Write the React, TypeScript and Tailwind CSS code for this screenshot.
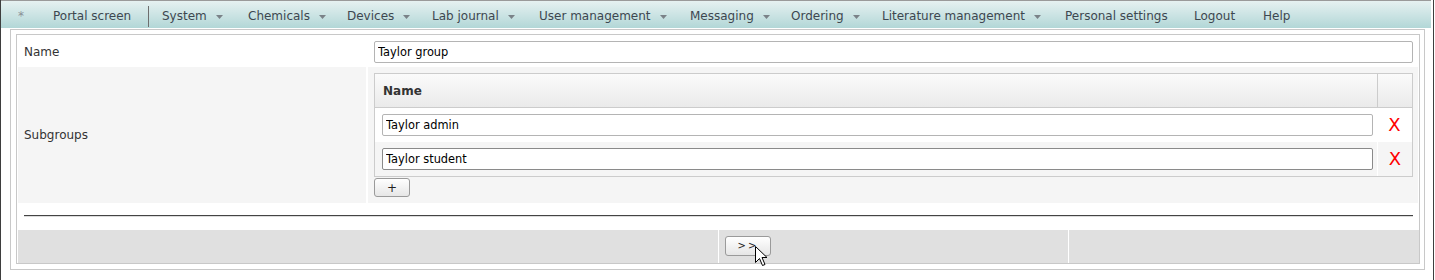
import React from 'react';

const menuItems: { label: string; width: number; arrow?: boolean }[] = [
  { label: 'Chemicals', width: 99, arrow: true },
  { label: 'Devices', width: 85, arrow: true },
  { label: 'Lab journal', width: 107, arrow: true },
  { label: 'User management', width: 151, arrow: true },
  { label: 'Messaging', width: 101, arrow: true },
  { label: 'Ordering', width: 91, arrow: true },
  { label: 'Literature management', width: 183, arrow: true },
  { label: 'Personal settings', width: 129 },
  { label: 'Logout', width: 69 },
  { label: 'Help', width: 60 },
];

const Caret = () => (
  <svg width="7" height="4" viewBox="0 0 7 4" className="ml-[9px] mt-[2px] shrink-0">
    <polygon points="0,0 7,0 3.5,4" fill="#7a8288" />
  </svg>
);

const MenuItem = ({ label, width, arrow }: { label: string; width: number; arrow?: boolean }) => (
  <div className="flex items-center shrink-0 whitespace-nowrap" style={{ width }}>
    <span>{label}</span>
    {arrow && <Caret />}
  </div>
);

const TextBox = ({ value, dark }: { value: string; dark?: boolean }) => (
  <input
    readOnly
    value={value}
    className={`block w-full h-[22px] bg-white rounded-[2px] border pl-[3px] text-[11.4px] text-black outline-none ${
      dark ? 'border-[#8a8a8a]' : 'border-[#b4b4b4]'
    }`}
  />
);

const RemoveMark = () => (
  <span className="text-[18px] leading-none text-[#ff0000]">X</span>
);

export default function App() {
  return (
    <div className="relative w-[1434px] h-[280px] bg-white border-l border-r border-[#3e3e3e] font-['DejaVu_Sans',sans-serif] text-[12px] text-[#333]">
      {/* top menu */}
      <div className="mr-[2px] h-[28px] border-t border-[#9a9a9a] bg-gradient-to-b from-[#e6f1f1] to-[#b2d7d7] flex items-center pl-[17px] pt-[3px] text-[#3d4750]">
        <div className="w-[35px] text-[#8a9096] shrink-0">*</div>
        <div className="w-[95px] shrink-0 whitespace-nowrap">Portal screen</div>
        <div className="w-px h-[21px] bg-[#6e6e6e] shrink-0" />
        <div className="pl-[13px] w-[99px] flex items-center shrink-0 whitespace-nowrap">
          <span>System</span>
          <Caret />
        </div>
        {menuItems.map((m) => (
          <MenuItem key={m.label} {...m} />
        ))}
      </div>

      {/* outer frame */}
      <div className="ml-[9px] mt-[1px] w-[1415px] h-[241px] border border-[#c8c8c8]">
        <div className="ml-[5px] mt-[4px] w-[1404px] h-[230px] border border-[#c8c8c8]">
          {/* form rows */}
          <div className="grid grid-cols-[348px_1fr] gap-x-[2px] gap-y-px pl-px pr-px pt-px">
            <div className="h-[30px] flex items-center pl-[6px] pt-px bg-white">Name</div>
            <div className="h-[30px] pt-[5px] pl-[6px] pr-[5px] bg-white">
              <TextBox value="Taylor group" />
            </div>

            <div className="h-[136px] flex items-center pl-[6px] bg-[#f5f5f5]">Subgroups</div>
            <div className="h-[136px] pt-[6px] pl-[6px] pr-[5px] bg-[#f5f5f5]">
              <div className="border border-[#cccccc] bg-white">
                <div className="flex h-[34px] border-b border-[#cccccc] bg-gradient-to-b from-[#fbfbfb] to-[#eaeaea]">
                  <div className="flex-1 flex items-center pl-[8px] font-bold text-[#333]">Name</div>
                  <div className="w-[35px] border-l border-[#cccccc]" />
                </div>
                <div className="flex h-[34px] bg-white">
                  <div className="flex-1 pt-[6px] pl-[7px] pr-[4px]">
                    <TextBox value="Taylor admin" />
                  </div>
                  <div className="w-[35px] flex items-center justify-center">
                    <RemoveMark />
                  </div>
                </div>
                <div className="flex h-[34px] bg-[#f5f5f5]">
                  <div className="flex-1 pt-[6px] pl-[7px] pr-[4px]">
                    <TextBox value="Taylor student" dark />
                  </div>
                  <div className="w-[35px] flex items-center justify-center border-l border-white">
                    <RemoveMark />
                  </div>
                </div>
              </div>
              <button className="mt-px w-[36px] h-[19px] rounded-[3px] border border-[#9a9a9a] bg-gradient-to-b from-white to-[#e6e6e6] text-[12px] leading-none text-[#222]">
                +
              </button>
            </div>
          </div>

          {/* separator */}
          <div className="h-[27px] pl-[7px] pr-[6px] pt-[12px]">
            <div className="border-t border-[#444] border-b border-b-[#dcdcdc]" />
          </div>

          {/* footer */}
          <div className="grid grid-cols-[700px_349px_1fr] gap-x-px h-[33px] pl-px">
            <div className="bg-[#e0e0e0]" />
            <div className="bg-[#e0e0e0] pl-[6px] pt-[6px]">
              <button className="w-[46px] h-[20px] rounded-[3px] border border-[#9a9a9a] bg-gradient-to-b from-white to-[#e6e6e6] text-[10px] tracking-[2px] text-[#222] leading-none">
                &gt;&gt;
              </button>
            </div>
            <div className="bg-[#e0e0e0]" />
          </div>
        </div>
      </div>

      {/* mouse pointer */}
      <svg className="absolute left-[754px] top-[246px]" width="13" height="21" viewBox="0 0 13 21">
        <polygon
          points="0.5,0.5 0.5,16.5 4.5,12.5 7.5,19.5 10,18.5 7,11.5 12,11.5"
          fill="#ffffff"
          stroke="#000000"
          strokeWidth="1"
          strokeLinejoin="miter"
        />
      </svg>
    </div>
  );
}
